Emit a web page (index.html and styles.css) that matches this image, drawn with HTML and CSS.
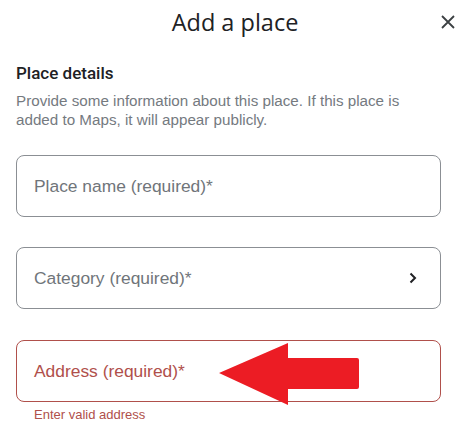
FILE: index.html
```html
<!DOCTYPE html>
<html lang="en">
<head>
    <meta charset="UTF-8">
    <meta name="viewport" content="width=device-width, initial-scale=1.0">
    <title>Add a place</title>
    <link rel="stylesheet" href="styles.css">
</head>
<body>
    <div class="dialog">
        <header class="dialog-header">
            <span></span>
            <h1 class="dialog-title">Add a place</h1>
            <button class="close-btn" aria-label="Close">
                <svg width="14" height="14" viewBox="0 0 14 14">
                    <path d="M1 1 L13 13 M13 1 L1 13" stroke="#3c4043" stroke-width="1.8" fill="none"/>
                </svg>
            </button>
        </header>

        <section class="details">
            <h2 class="section-title">Place details</h2>
            <p class="section-text">Provide some information about this place. If this place is added to Maps, it will appear publicly.</p>

            <div class="field">
                <span class="field-label">Place name (required)*</span>
            </div>

            <div class="field">
                <span class="field-label">Category (required)*</span>
                <svg class="chevron" width="8" height="12" viewBox="0 0 8 12">
                    <path d="M1.5 1.5 L6 6 L1.5 10.5" stroke="#202124" stroke-width="2" fill="none"/>
                </svg>
            </div>

            <div class="field field-error">
                <span class="field-label">Address (required)*</span>
                <!-- annotation arrow -->
                <svg class="arrow" width="142" height="64" viewBox="0 0 142 64">
                    <path d="M1 31 L70 1 L70 16 L139 16 Q141 16 141 18 L141 45 Q141 47 139 47 L70 47 L70 63 Z" fill="#ec1c24"/>
                </svg>
            </div>
            <div class="error-text">Enter valid address</div>
        </section>
    </div>
</body>
</html>
```

FILE: styles.css
```css
body {
    margin: 0;
    padding: 0;
    background-color: #fff;
    font-family: "Liberation Sans", Arial, sans-serif;
    color: #202124;
}

.dialog {
    width: 470px;
    height: 425px;
    overflow: hidden;
}

.dialog-header {
    display: grid;
    grid-template-columns: 1fr auto 1fr;
    align-items: center;
    height: 44px;
}

.dialog-title {
    margin: 0;
    font-family: "Open Sans", sans-serif;
    font-weight: 400;
    font-size: 23.5px;
    color: #202124;
}

.close-btn {
    justify-self: end;
    margin-right: 15px;
    padding: 0;
    border: none;
    background: none;
    display: flex;
    cursor: pointer;
}

.details {
    padding: 19px 29px 0 16px;
}

.section-title {
    margin: 0;
    font-family: Roboto, sans-serif;
    font-size: 17px;
    font-weight: 500;
    color: #202124;
}

.section-text {
    margin: 8px 0 0;
    font-size: 15.2px;
    line-height: 19px;
    color: #757a7f;
}

.field {
    position: relative;
    display: flex;
    align-items: center;
    justify-content: space-between;
    height: 60px;
    margin-top: 30px;
    padding: 0 23px 0 17px;
    border: 1px solid #8b8f94;
    border-radius: 8px;
}

.details .section-text + .field {
    margin-top: 26px;
}

.field-label {
    font-size: 17.4px;
    color: #70757a;
}

.field-error {
    margin-top: 31px;
    border-color: #b0504b;
}

.field-error .field-label {
    color: #b0504b;
}

.arrow {
    position: absolute;
    left: 201px;
    top: 1px;
}

.error-text {
    margin: 5px 0 0 18px;
    font-size: 13px;
    color: #b0504b;
}
```
